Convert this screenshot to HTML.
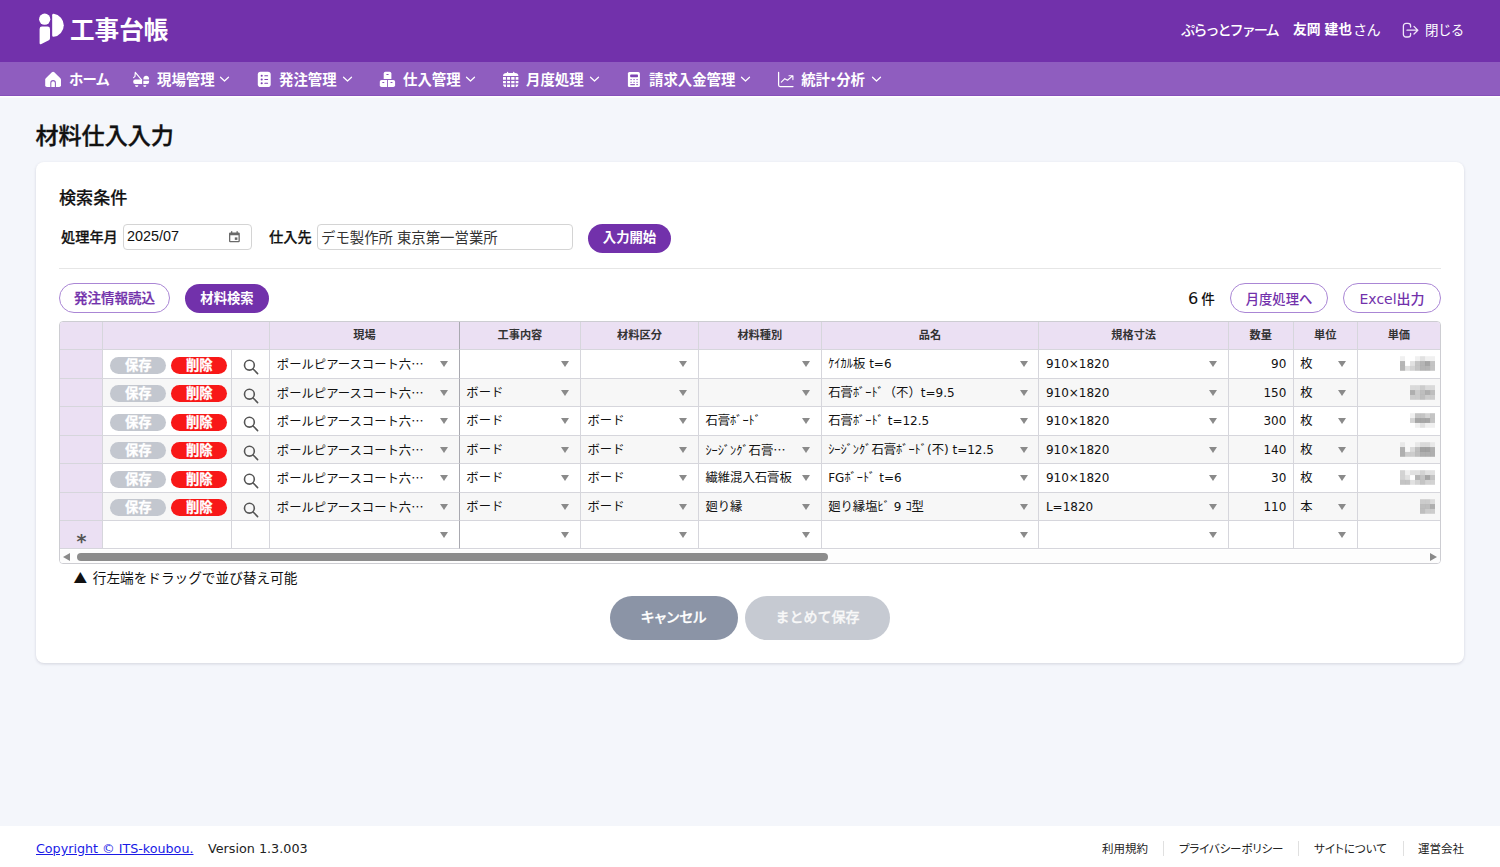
<!DOCTYPE html>
<html lang="ja">
<head>
<meta charset="utf-8">
<title>材料仕入入力 - 工事台帳</title>
<style>
*{box-sizing:border-box;margin:0;padding:0}
html,body{width:1500px;height:867px;overflow:hidden}
body{background:#f4f6fb;font-family:"Liberation Sans","Noto Sans CJK JP",sans-serif;color:#111;position:relative;font-size:14px}
.abs{position:absolute;white-space:nowrap}
#hdr{position:absolute;left:0;top:0;width:1500px;height:62.5px;background:#7231ab}
#nav{position:absolute;left:0;top:62.4px;width:1500px;height:34px;background:#8f5dbf;border-bottom:1px solid #8650ba;box-shadow:0 1.5px 0 #fff}
.w{color:#fff}
.navt{position:absolute;top:63.6px;height:34px;line-height:33px;font-size:14.4px;font-weight:700;color:#fff;white-space:nowrap}
.chev{position:absolute;top:75px;width:11px;height:8px}
.ico{position:absolute}
#card{position:absolute;left:36px;top:162px;width:1428px;height:501px;background:#fff;border-radius:8px;box-shadow:0 1px 3px rgba(60,60,90,.18)}
.btn{position:absolute;border-radius:16px;font-size:13.33px;text-align:center;white-space:nowrap}
.btn.fill{background:#7231ab;color:#fff;font-weight:700}
.btn.out{background:#fff;color:#7231ab;border:1.4px solid #aa86d5}
.inp{position:absolute;top:224px;height:26px;border:1px solid #d4d4d4;border-radius:4px;background:#fff;font-size:14.4px;line-height:23px;padding-left:3px;white-space:nowrap}
#grid{position:absolute;left:59px;top:321px;width:1382px;height:243px;border:1px solid #cdcdd2;border-radius:4px;background:#fff;overflow:hidden}
.c{position:absolute;border-right:1px solid #d6d6dc;border-bottom:1px solid #d6d6dc;font-size:12.35px;line-height:29.2px;padding-left:6.5px;white-space:nowrap;overflow:hidden;color:#111;font-family:"DejaVu Sans","Noto Sans CJK JP",sans-serif}
.c.h{font-family:"Liberation Sans","Noto Sans CJK JP",sans-serif;background:#ebe0f3;font-size:11.2px;font-weight:700;text-align:center;padding:0;color:#333;line-height:27.6px;font-feature-settings:normal;letter-spacing:0}
.c.alt{background:#f7f7f7}
.c.num{text-align:right;padding-right:6.3px;padding-left:0;font-size:12px}
.lt{font-size:12px}
.c.fz{border-right-color:#a9a9b0}
.tri{position:absolute;right:10.5px;top:11.2px;width:0;height:0;border-left:4.5px solid transparent;border-right:4.5px solid transparent;border-top:6px solid #8a8a8a}
.pill{-webkit-text-stroke:.3px #fff;position:absolute;top:6.7px;width:56.5px;height:17px;border-radius:8.5px;color:#fff;font-size:13.3px;font-weight:700;line-height:17px;font-family:"Liberation Sans","Noto Sans CJK JP",sans-serif;text-align:center;letter-spacing:0;font-feature-settings:normal}
.hk{letter-spacing:0}
.el{font-family:"Noto Sans CJK JP",sans-serif;font-feature-settings:normal;letter-spacing:0;display:inline-block;}
.ast{position:absolute;left:0;width:43px;top:6px;text-align:center;font-size:19px;font-weight:700;color:#555;font-family:"DejaVu Sans",sans-serif;line-height:28px}
#ft{position:absolute;left:0;top:826px;width:1500px;height:41px;background:#fff}
.ftt{position:absolute;top:826px;height:41px;line-height:46.6px;font-size:11.5px;color:#222;white-space:nowrap}
.sep{position:absolute;top:841.3px;width:1px;height:15.2px;background:#e0e0e0}
</style>
</head>
<body>
<div id="hdr"></div>
<div id="nav"></div>
<svg class="ico" style="left:36px;top:10px" width="32" height="38" viewBox="36 10 32 38">
<circle cx="44.7" cy="19.2" r="5.6" fill="#fff"/>
<path d="M39.6 29 Q39.6 26.6 42 26.6 L47.6 26.6 Q50 26.6 50 29 L50 38.3 Q50 39.6 48.8 40.2 L41.4 44 Q39.6 44.8 39.6 43 Z" fill="#fff"/>
<path d="M52.2 15.2 Q52.2 13.7 53.7 13.8 A11.6 11.6 0 0 1 53.7 36.8 Q52.2 36.9 52.2 35.4 Z" fill="#fff"/>
</svg>
<div class="abs w" style="left:70px;top:12.5px;font-size:24.6px;font-weight:700;line-height:36px">工事台帳</div>
<div class="abs w" style="left:1181px;top:19px;font-size:14.2px;font-weight:500;line-height:22px;letter-spacing:-2.05px">ぷらっとファーム</div>
<div class="abs w" style="left:1293px;top:19px;font-size:13.8px;font-weight:700;line-height:22px">友岡 建也</div>
<div class="abs w" style="left:1353px;top:19px;font-size:14.2px;font-weight:400;line-height:22px;letter-spacing:-.8px">さん</div>
<svg class="ico" style="left:1400px;top:20px" width="22" height="20" viewBox="1400 20 22 20" fill="none" stroke="#f0e6f8" stroke-width="1.3" stroke-linecap="round" stroke-linejoin="round">
<path d="M1410.6 27 V26 A2.6 2.6 0 0 0 1408 23.4 H1406 A2.6 2.6 0 0 0 1403.4 26 V34.4 A2.6 2.6 0 0 0 1406 37 H1408 A2.6 2.6 0 0 0 1410.6 34.4 V33.4"/>
<path d="M1407 30.2 H1417.6 M1414 26.4 L1417.8 30.2 L1414 34"/>
</svg>
<div class="abs w" style="left:1425px;top:19.5px;font-size:13.5px;font-weight:400;line-height:22px;letter-spacing:-.6px">閉じる</div>

<!-- home -->
<svg class="ico" style="left:44px;top:70px" width="19" height="19" viewBox="44 70 19 19">
<path d="M45.2 79.6 Q45.2 78.8 45.8 78.2 L51.9 72.2 Q53.1 71.1 54.3 72.2 L60.4 78.2 Q61 78.8 61 79.6 V85.3 Q61 87.1 59.2 87.1 H47 Q45.2 87.1 45.2 85.3 Z" fill="#fff"/>
<path d="M50.8 87.2 V82.9 A2.3 2.3 0 0 1 55.4 82.9 V87.2" fill="none" stroke="#8f5dbf" stroke-width="1.05"/>
</svg>
<div class="navt" style="left:69px;letter-spacing:-.9px">ホーム</div>
<!-- site -->
<svg class="ico" style="left:131px;top:70px" width="20" height="19" viewBox="131 70 20 19">
<path d="M133.6 77.6 L135 76.4 L135.3 72.4 L141.6 79.9" fill="none" stroke="#fff" stroke-width="1.15" stroke-linejoin="round" stroke-linecap="round"/>
<path d="M133.2 81.6 Q133.2 79.6 135.2 79.6 H142.1 V84 H135.2 Q133.2 84 133.2 82 Z" fill="#fff"/>
<path d="M135 85.2 H138.4 A1.7 1.8 0 0 1 135 85.2 Z" fill="#fff"/>
<path d="M143.3 79.5 A2.9 3.7 0 0 1 149.1 79.5 Z" fill="#fff"/>
<path d="M143.3 80.8 H149.1 V82 Q149.1 84 147.1 84 H143.3 Z" fill="#fff"/>
<path d="M143.2 85.2 H146.4 A1.6 1.8 0 0 1 143.2 85.2 Z" fill="#fff"/>
</svg>
<div class="navt" style="left:157px">現場管理</div>
<svg class="chev" style="left:218.7px" viewBox="0 0 11 8" fill="none" stroke="#fff" stroke-width="1.25" stroke-linecap="round" stroke-linejoin="round"><path d="M1.5 2.2 L5.5 6 L9.5 2.2"/></svg>
<!-- order -->
<svg class="ico" style="left:256px;top:70px" width="17" height="19" viewBox="256 70 17 19">
<rect x="257.8" y="71.8" width="12.9" height="15.3" rx="2.8" fill="#fff"/>
<g fill="#7a3fb2"><circle cx="261.7" cy="75.7" r="1.05"/><circle cx="261.7" cy="79.5" r="1.05"/><circle cx="261.7" cy="83.3" r="1.05"/>
<rect x="264.3" y="75.15" width="3.8" height="1.1" rx=".5"/><rect x="264.3" y="78.95" width="3.8" height="1.1" rx=".5"/><rect x="264.3" y="82.75" width="3.8" height="1.1" rx=".5"/></g>
</svg>
<div class="navt" style="left:279px">発注管理</div>
<svg class="chev" style="left:341.7px" viewBox="0 0 11 8" fill="none" stroke="#fff" stroke-width="1.25" stroke-linecap="round" stroke-linejoin="round"><path d="M1.5 2.2 L5.5 6 L9.5 2.2"/></svg>
<!-- purchase -->
<svg class="ico" style="left:378px;top:70px" width="19" height="19" viewBox="378 70 19 19">
<path d="M383.7 73.6 Q383.7 71.8 385.5 71.8 H389.6 Q391.4 71.8 391.4 73.6 V78.9 H383.7 Z" fill="#fff"/>
<path d="M379.8 81.7 Q379.8 79.9 381.6 79.9 H387 V87.1 H381.6 Q379.8 87.1 379.8 85.3 Z" fill="#fff"/>
<path d="M387.9 79.9 H393.3 Q395.1 79.9 395.1 81.7 V85.3 Q395.1 87.1 393.3 87.1 H387.9 Z" fill="#fff"/>
<g fill="#8148b6"><ellipse cx="387.5" cy="74.5" rx="1.3" ry=".5"/><ellipse cx="383.3" cy="82.5" rx="1.2" ry=".5"/><ellipse cx="391.5" cy="82.5" rx="1.2" ry=".5"/></g>
</svg>
<div class="navt" style="left:403px">仕入管理</div>
<svg class="chev" style="left:464.7px" viewBox="0 0 11 8" fill="none" stroke="#fff" stroke-width="1.25" stroke-linecap="round" stroke-linejoin="round"><path d="M1.5 2.2 L5.5 6 L9.5 2.2"/></svg>
<!-- monthly -->
<svg class="ico" style="left:501px;top:70px" width="19" height="19" viewBox="501 70 19 19">
<path d="M503 76 Q503 72.9 506.4 72.9 H515 Q518.4 72.9 518.4 76 V84 Q518.4 87.1 515.4 87.1 H506 Q503 87.1 503 84 Z" fill="#fff"/>
<rect x="506.9" y="71.8" width="1.3" height="2.4" rx=".6" fill="#fff"/><rect x="513.1" y="71.8" width="1.3" height="2.4" rx=".6" fill="#fff"/>
<g stroke="#8f5dbf" stroke-width="1.15" fill="none"><path d="M502.5 76.5 H519 M502.5 80.3 H519 M502.5 83.9 H519 M506.5 76.5 V87.5 M510.65 76.5 V87.5 M515.1 76.5 V87.5"/></g>
</svg>
<div class="navt" style="left:526px">月度処理</div>
<svg class="chev" style="left:588.7px" viewBox="0 0 11 8" fill="none" stroke="#fff" stroke-width="1.25" stroke-linecap="round" stroke-linejoin="round"><path d="M1.5 2.2 L5.5 6 L9.5 2.2"/></svg>
<!-- billing -->
<svg class="ico" style="left:626px;top:70px" width="16" height="19" viewBox="626 70 16 19">
<rect x="627.9" y="72" width="12" height="15.1" rx="1.5" fill="#fff"/>
<rect x="630.2" y="74.4" width="7.8" height="2.8" rx=".8" fill="#7d43b4"/>
<g fill="#a77fcf"><rect x="630.2" y="79.1" width="1.8" height="1"/><rect x="633.2" y="79.1" width="1.8" height="1"/><rect x="636.2" y="79.1" width="1.8" height="1"/>
<rect x="630.2" y="81.8" width="1.8" height="1"/><rect x="633.2" y="81.8" width="1.8" height="1"/><rect x="636.2" y="81.8" width="1.8" height="1"/></g>
<g fill="#9160c0"><rect x="630.2" y="84.1" width="4.8" height="1.1" rx=".4"/><rect x="636.2" y="84.1" width="1.8" height="1.1" rx=".4"/></g>
</svg>
<div class="navt" style="left:649px">請求入金管理</div>
<svg class="chev" style="left:739.7px" viewBox="0 0 11 8" fill="none" stroke="#fff" stroke-width="1.25" stroke-linecap="round" stroke-linejoin="round"><path d="M1.5 2.2 L5.5 6 L9.5 2.2"/></svg>
<!-- stats -->
<svg class="ico" style="left:776px;top:70px" width="19" height="19" viewBox="776 70 19 19" fill="none" stroke="#fff" stroke-width="1.25" stroke-linecap="round" stroke-linejoin="round">
<path d="M778.6 72.3 V85 Q778.6 86.5 780.1 86.5 H793"/>
<path d="M781.3 82.2 L784.8 78.7 L787.5 80.2 L792.6 75.9 M789 75.7 H792.9 V79.6" stroke-width="1.15"/>
</svg>
<div class="navt" style="left:801.2px">統計<span style="display:inline-block;width:6.2px;text-indent:-4.1px;white-space:nowrap">・</span>分析</div>
<svg class="chev" style="left:870.7px" viewBox="0 0 11 8" fill="none" stroke="#fff" stroke-width="1.25" stroke-linecap="round" stroke-linejoin="round"><path d="M1.5 2.2 L5.5 6 L9.5 2.2"/></svg>

<div class="abs" style="left:35.4px;top:118.9px;font-size:23.1px;font-weight:500;line-height:34px;color:#111;-webkit-text-stroke:.35px #111">材料仕入入力</div>
<div id="card"></div>
<div class="abs" style="left:59px;top:186px;font-size:17.1px;font-weight:500;line-height:26px;-webkit-text-stroke:.2px #111">検索条件</div>
<div class="abs" style="left:61px;top:226px;font-size:14.2px;font-weight:500;line-height:22px;-webkit-text-stroke:.25px #111">処理年月</div>
<div class="inp" style="left:123px;width:129px">2025/07</div>
<svg class="ico" style="left:227px;top:229px" width="16" height="16" viewBox="227 229 16 16">
<path d="M230.2 232.4 H238.6 Q239.8 232.4 239.8 233.6 V241 Q239.8 242.2 238.6 242.2 H230.2 Q229 242.2 229 241 V233.6 Q229 232.4 230.2 232.4 Z M230.3 235.2 V240.9 H238.5 V235.2 Z" fill="#6a6a6a" fill-rule="evenodd"/>
<rect x="231" y="231.2" width="1.3" height="2" fill="#6a6a6a"/><rect x="236.5" y="231.2" width="1.3" height="2" fill="#6a6a6a"/>
<rect x="234.8" y="237.4" width="2.6" height="2.5" fill="#6a6a6a"/>
</svg>
<div class="abs" style="left:269px;top:226px;font-size:14.2px;font-weight:500;line-height:22px;-webkit-text-stroke:.25px #111">仕入先</div>
<div class="inp" style="left:317px;width:256px;color:#333;line-height:26px">デモ製作所 東京第一営業所</div>
<div class="btn fill" style="left:588px;top:224px;width:83px;height:29px;line-height:28.6px;border-radius:15px">入力開始</div>
<div class="abs" style="left:59px;top:268px;width:1382px;height:1px;background:#e6e6e6"></div>
<div class="btn out" style="left:58.7px;top:283.2px;width:111.6px;height:30.3px;line-height:30.6px;font-size:13.5px;font-weight:500;-webkit-text-stroke:.25px #7231ab">発注情報読込</div>
<div class="btn fill" style="left:185px;top:284.3px;width:84px;height:28.6px;line-height:30.4px">材料検索</div>
<div class="abs" style="left:1188px;top:288px;font-size:13.6px;line-height:22px;color:#111;font-weight:500"><span style="font-family:'DejaVu Sans',sans-serif;font-weight:400;font-size:16.2px;margin-right:3px">6</span>件</div>
<div class="btn out" style="left:1229.8px;top:283.2px;width:98.5px;height:30.3px;line-height:31.2px;font-weight:500">月度処理へ</div>
<div class="btn out" style="left:1342.8px;top:283.2px;width:98.5px;height:30.3px;line-height:31.2px;font-weight:500;font-family:'DejaVu Sans','Noto Sans CJK JP',sans-serif;font-size:14px">Excel出力</div>

<div id="grid">
<div class="c h" style="left:0.0px;top:0.0px;width:43.3px;height:28.2px;"></div>
<div class="c h" style="left:43.3px;top:0.0px;width:167.0px;height:28.2px;"></div>
<div class="c h fz" style="left:210.3px;top:0.0px;width:189.5px;height:28.2px;">現場</div>
<div class="c h" style="left:399.8px;top:0.0px;width:121.2px;height:28.2px;">工事内容</div>
<div class="c h" style="left:521.0px;top:0.0px;width:117.9px;height:28.2px;">材料区分</div>
<div class="c h" style="left:638.9px;top:0.0px;width:122.8px;height:28.2px;">材料種別</div>
<div class="c h" style="left:761.7px;top:0.0px;width:217.7px;height:28.2px;">品名</div>
<div class="c h" style="left:979.4px;top:0.0px;width:189.5px;height:28.2px;">規格寸法</div>
<div class="c h" style="left:1168.9px;top:0.0px;width:64.8px;height:28.2px;">数量</div>
<div class="c h" style="left:1233.7px;top:0.0px;width:64.0px;height:28.2px;">単位</div>
<div class="c h" style="left:1297.7px;top:0.0px;width:83.3px;height:28.2px;">単価</div>
<div class="c h" style="left:0.0px;top:28.2px;width:43.3px;height:28.5px;"></div>
<div class="c " style="left:43.3px;top:28.2px;width:129.0px;height:28.5px;"><span class="pill" style="left:6.7px;background:#c3c7cf">保存</span><span class="pill" style="left:67.7px;background:#f81818">削除</span></div>
<div class="c " style="left:172.3px;top:28.2px;width:38.0px;height:28.5px;"><svg style="position:absolute;left:9px;top:6px" width="20" height="20" viewBox="0 0 20 20" fill="none" stroke="#555" stroke-width="1.6" stroke-linecap="round"><circle cx="8.4" cy="9.2" r="4.9"/><path d="M12.1 13 L16.6 17.6"/></svg></div>
<div class="c  fz" style="left:210.3px;top:28.2px;width:189.5px;height:28.5px;">ポールピアースコート六<span class="el">…</span><i class="tri"></i></div>
<div class="c " style="left:399.8px;top:28.2px;width:121.2px;height:28.5px;"><i class="tri"></i></div>
<div class="c " style="left:521.0px;top:28.2px;width:117.9px;height:28.5px;"><i class="tri"></i></div>
<div class="c " style="left:638.9px;top:28.2px;width:122.8px;height:28.5px;"><i class="tri"></i></div>
<div class="c " style="left:761.7px;top:28.2px;width:217.7px;height:28.5px;"><span class="hk">ｹｲｶﾙ</span>板 <span class="lt">t=6</span><i class="tri"></i></div>
<div class="c " style="left:979.4px;top:28.2px;width:189.5px;height:28.5px;font-size:12px;">910×1820<i class="tri"></i></div>
<div class="c  num" style="left:1168.9px;top:28.2px;width:64.8px;height:28.5px;">90</div>
<div class="c " style="left:1233.7px;top:28.2px;width:64.0px;height:28.5px;">枚<i class="tri"></i></div>
<div class="c " style="left:1297.7px;top:28.2px;width:83.3px;height:28.5px;"><svg style="position:absolute;left:42.5px;top:6px" width="35" height="15" viewBox="0 0 35 14.6"><rect x="0" y="0.00" width="5.05" height="4.9" fill="#000" fill-opacity="0.058"/><rect x="15" y="0.00" width="5.05" height="4.9" fill="#000" fill-opacity="0.058"/><rect x="20" y="0.00" width="5.05" height="4.9" fill="#000" fill-opacity="0.116"/><rect x="25" y="0.00" width="5.05" height="4.9" fill="#000" fill-opacity="0.058"/><rect x="30" y="0.00" width="5.05" height="4.9" fill="#000" fill-opacity="0.058"/><rect x="0" y="4.85" width="5.05" height="4.9" fill="#000" fill-opacity="0.290"/><rect x="10" y="4.85" width="5.05" height="4.9" fill="#000" fill-opacity="0.116"/><rect x="15" y="4.85" width="5.05" height="4.9" fill="#000" fill-opacity="0.232"/><rect x="20" y="4.85" width="5.05" height="4.9" fill="#000" fill-opacity="0.290"/><rect x="25" y="4.85" width="5.05" height="4.9" fill="#000" fill-opacity="0.348"/><rect x="30" y="4.85" width="5.05" height="4.9" fill="#000" fill-opacity="0.232"/><rect x="0" y="9.70" width="5.05" height="4.9" fill="#000" fill-opacity="0.290"/><rect x="5" y="9.70" width="5.05" height="4.9" fill="#000" fill-opacity="0.116"/><rect x="10" y="9.70" width="5.05" height="4.9" fill="#000" fill-opacity="0.174"/><rect x="15" y="9.70" width="5.05" height="4.9" fill="#000" fill-opacity="0.232"/><rect x="20" y="9.70" width="5.05" height="4.9" fill="#000" fill-opacity="0.290"/><rect x="25" y="9.70" width="5.05" height="4.9" fill="#000" fill-opacity="0.290"/><rect x="30" y="9.70" width="5.05" height="4.9" fill="#000" fill-opacity="0.232"/></svg></div>
<div class="c h" style="left:0.0px;top:56.7px;width:43.3px;height:28.4px;"></div>
<div class="c alt" style="left:43.3px;top:56.7px;width:129.0px;height:28.4px;"><span class="pill" style="left:6.7px;background:#c3c7cf">保存</span><span class="pill" style="left:67.7px;background:#f81818">削除</span></div>
<div class="c alt" style="left:172.3px;top:56.7px;width:38.0px;height:28.4px;"><svg style="position:absolute;left:9px;top:6px" width="20" height="20" viewBox="0 0 20 20" fill="none" stroke="#555" stroke-width="1.6" stroke-linecap="round"><circle cx="8.4" cy="9.2" r="4.9"/><path d="M12.1 13 L16.6 17.6"/></svg></div>
<div class="c alt fz" style="left:210.3px;top:56.7px;width:189.5px;height:28.4px;">ポールピアースコート六<span class="el">…</span><i class="tri"></i></div>
<div class="c alt" style="left:399.8px;top:56.7px;width:121.2px;height:28.4px;">ボード<i class="tri"></i></div>
<div class="c alt" style="left:521.0px;top:56.7px;width:117.9px;height:28.4px;"><i class="tri"></i></div>
<div class="c alt" style="left:638.9px;top:56.7px;width:122.8px;height:28.4px;"><i class="tri"></i></div>
<div class="c alt" style="left:761.7px;top:56.7px;width:217.7px;height:28.4px;">石膏<span class="hk">ﾎﾞｰﾄﾞ</span>（不）<span class="lt">t=9.5</span><i class="tri"></i></div>
<div class="c alt" style="left:979.4px;top:56.7px;width:189.5px;height:28.4px;font-size:12px;">910×1820<i class="tri"></i></div>
<div class="c alt num" style="left:1168.9px;top:56.7px;width:64.8px;height:28.4px;">150</div>
<div class="c alt" style="left:1233.7px;top:56.7px;width:64.0px;height:28.4px;">枚<i class="tri"></i></div>
<div class="c alt" style="left:1297.7px;top:56.7px;width:83.3px;height:28.4px;"><svg style="position:absolute;left:42.5px;top:6px" width="35" height="15" viewBox="0 0 35 14.6"><rect x="10" y="0.00" width="5.05" height="4.9" fill="#000" fill-opacity="0.116"/><rect x="15" y="0.00" width="5.05" height="4.9" fill="#000" fill-opacity="0.116"/><rect x="20" y="0.00" width="5.05" height="4.9" fill="#000" fill-opacity="0.174"/><rect x="25" y="0.00" width="5.05" height="4.9" fill="#000" fill-opacity="0.116"/><rect x="30" y="0.00" width="5.05" height="4.9" fill="#000" fill-opacity="0.116"/><rect x="10" y="4.85" width="5.05" height="4.9" fill="#000" fill-opacity="0.290"/><rect x="15" y="4.85" width="5.05" height="4.9" fill="#000" fill-opacity="0.174"/><rect x="20" y="4.85" width="5.05" height="4.9" fill="#000" fill-opacity="0.232"/><rect x="25" y="4.85" width="5.05" height="4.9" fill="#000" fill-opacity="0.290"/><rect x="30" y="4.85" width="5.05" height="4.9" fill="#000" fill-opacity="0.232"/><rect x="10" y="9.70" width="5.05" height="4.9" fill="#000" fill-opacity="0.174"/><rect x="15" y="9.70" width="5.05" height="4.9" fill="#000" fill-opacity="0.174"/><rect x="20" y="9.70" width="5.05" height="4.9" fill="#000" fill-opacity="0.232"/><rect x="25" y="9.70" width="5.05" height="4.9" fill="#000" fill-opacity="0.174"/><rect x="30" y="9.70" width="5.05" height="4.9" fill="#000" fill-opacity="0.174"/></svg></div>
<div class="c h" style="left:0.0px;top:85.1px;width:43.3px;height:28.5px;"></div>
<div class="c " style="left:43.3px;top:85.1px;width:129.0px;height:28.5px;"><span class="pill" style="left:6.7px;background:#c3c7cf">保存</span><span class="pill" style="left:67.7px;background:#f81818">削除</span></div>
<div class="c " style="left:172.3px;top:85.1px;width:38.0px;height:28.5px;"><svg style="position:absolute;left:9px;top:6px" width="20" height="20" viewBox="0 0 20 20" fill="none" stroke="#555" stroke-width="1.6" stroke-linecap="round"><circle cx="8.4" cy="9.2" r="4.9"/><path d="M12.1 13 L16.6 17.6"/></svg></div>
<div class="c  fz" style="left:210.3px;top:85.1px;width:189.5px;height:28.5px;">ポールピアースコート六<span class="el">…</span><i class="tri"></i></div>
<div class="c " style="left:399.8px;top:85.1px;width:121.2px;height:28.5px;">ボード<i class="tri"></i></div>
<div class="c " style="left:521.0px;top:85.1px;width:117.9px;height:28.5px;">ボード<i class="tri"></i></div>
<div class="c " style="left:638.9px;top:85.1px;width:122.8px;height:28.5px;">石膏<span class="hk">ﾎﾞｰﾄﾞ</span><i class="tri"></i></div>
<div class="c " style="left:761.7px;top:85.1px;width:217.7px;height:28.5px;">石膏<span class="hk">ﾎﾞｰﾄﾞ</span> <span class="lt">t=12.5</span><i class="tri"></i></div>
<div class="c " style="left:979.4px;top:85.1px;width:189.5px;height:28.5px;font-size:12px;">910×1820<i class="tri"></i></div>
<div class="c  num" style="left:1168.9px;top:85.1px;width:64.8px;height:28.5px;">300</div>
<div class="c " style="left:1233.7px;top:85.1px;width:64.0px;height:28.5px;">枚<i class="tri"></i></div>
<div class="c " style="left:1297.7px;top:85.1px;width:83.3px;height:28.5px;"><svg style="position:absolute;left:42.5px;top:6px" width="35" height="15" viewBox="0 0 35 14.6"><rect x="10" y="0.00" width="5.05" height="4.9" fill="#000" fill-opacity="0.058"/><rect x="15" y="0.00" width="5.05" height="4.9" fill="#000" fill-opacity="0.232"/><rect x="20" y="0.00" width="5.05" height="4.9" fill="#000" fill-opacity="0.232"/><rect x="25" y="0.00" width="5.05" height="4.9" fill="#000" fill-opacity="0.174"/><rect x="30" y="0.00" width="5.05" height="4.9" fill="#000" fill-opacity="0.232"/><rect x="10" y="4.85" width="5.05" height="4.9" fill="#000" fill-opacity="0.174"/><rect x="15" y="4.85" width="5.05" height="4.9" fill="#000" fill-opacity="0.348"/><rect x="20" y="4.85" width="5.05" height="4.9" fill="#000" fill-opacity="0.348"/><rect x="25" y="4.85" width="5.05" height="4.9" fill="#000" fill-opacity="0.348"/><rect x="30" y="4.85" width="5.05" height="4.9" fill="#000" fill-opacity="0.232"/><rect x="15" y="9.70" width="5.05" height="4.9" fill="#000" fill-opacity="0.058"/><rect x="20" y="9.70" width="5.05" height="4.9" fill="#000" fill-opacity="0.116"/><rect x="25" y="9.70" width="5.05" height="4.9" fill="#000" fill-opacity="0.058"/><rect x="30" y="9.70" width="5.05" height="4.9" fill="#000" fill-opacity="0.058"/></svg></div>
<div class="c h" style="left:0.0px;top:113.6px;width:43.3px;height:28.4px;"></div>
<div class="c alt" style="left:43.3px;top:113.6px;width:129.0px;height:28.4px;"><span class="pill" style="left:6.7px;background:#c3c7cf">保存</span><span class="pill" style="left:67.7px;background:#f81818">削除</span></div>
<div class="c alt" style="left:172.3px;top:113.6px;width:38.0px;height:28.4px;"><svg style="position:absolute;left:9px;top:6px" width="20" height="20" viewBox="0 0 20 20" fill="none" stroke="#555" stroke-width="1.6" stroke-linecap="round"><circle cx="8.4" cy="9.2" r="4.9"/><path d="M12.1 13 L16.6 17.6"/></svg></div>
<div class="c alt fz" style="left:210.3px;top:113.6px;width:189.5px;height:28.4px;">ポールピアースコート六<span class="el">…</span><i class="tri"></i></div>
<div class="c alt" style="left:399.8px;top:113.6px;width:121.2px;height:28.4px;">ボード<i class="tri"></i></div>
<div class="c alt" style="left:521.0px;top:113.6px;width:117.9px;height:28.4px;">ボード<i class="tri"></i></div>
<div class="c alt" style="left:638.9px;top:113.6px;width:122.8px;height:28.4px;"><span class="hk">ｼｰｼﾞﾝｸﾞ</span>石膏<span class="el">…</span><i class="tri"></i></div>
<div class="c alt" style="left:761.7px;top:113.6px;width:217.7px;height:28.4px;"><span class="hk">ｼｰｼﾞﾝｸﾞ</span>石膏<span class="hk">ﾎﾞｰﾄﾞ</span><span class="lt">(</span>不<span class="lt">) t=12.5</span><i class="tri"></i></div>
<div class="c alt" style="left:979.4px;top:113.6px;width:189.5px;height:28.4px;font-size:12px;">910×1820<i class="tri"></i></div>
<div class="c alt num" style="left:1168.9px;top:113.6px;width:64.8px;height:28.4px;">140</div>
<div class="c alt" style="left:1233.7px;top:113.6px;width:64.0px;height:28.4px;">枚<i class="tri"></i></div>
<div class="c alt" style="left:1297.7px;top:113.6px;width:83.3px;height:28.4px;"><svg style="position:absolute;left:42.5px;top:6px" width="35" height="15" viewBox="0 0 35 14.6"><rect x="0" y="0.00" width="5.05" height="4.9" fill="#000" fill-opacity="0.058"/><rect x="15" y="0.00" width="5.05" height="4.9" fill="#000" fill-opacity="0.058"/><rect x="20" y="0.00" width="5.05" height="4.9" fill="#000" fill-opacity="0.116"/><rect x="25" y="0.00" width="5.05" height="4.9" fill="#000" fill-opacity="0.116"/><rect x="30" y="0.00" width="5.05" height="4.9" fill="#000" fill-opacity="0.058"/><rect x="0" y="4.85" width="5.05" height="4.9" fill="#000" fill-opacity="0.290"/><rect x="10" y="4.85" width="5.05" height="4.9" fill="#000" fill-opacity="0.116"/><rect x="15" y="4.85" width="5.05" height="4.9" fill="#000" fill-opacity="0.232"/><rect x="20" y="4.85" width="5.05" height="4.9" fill="#000" fill-opacity="0.348"/><rect x="25" y="4.85" width="5.05" height="4.9" fill="#000" fill-opacity="0.348"/><rect x="30" y="4.85" width="5.05" height="4.9" fill="#000" fill-opacity="0.290"/><rect x="0" y="9.70" width="5.05" height="4.9" fill="#000" fill-opacity="0.290"/><rect x="5" y="9.70" width="5.05" height="4.9" fill="#000" fill-opacity="0.174"/><rect x="10" y="9.70" width="5.05" height="4.9" fill="#000" fill-opacity="0.174"/><rect x="15" y="9.70" width="5.05" height="4.9" fill="#000" fill-opacity="0.232"/><rect x="20" y="9.70" width="5.05" height="4.9" fill="#000" fill-opacity="0.290"/><rect x="25" y="9.70" width="5.05" height="4.9" fill="#000" fill-opacity="0.290"/><rect x="30" y="9.70" width="5.05" height="4.9" fill="#000" fill-opacity="0.290"/></svg></div>
<div class="c h" style="left:0.0px;top:142.0px;width:43.3px;height:28.5px;"></div>
<div class="c " style="left:43.3px;top:142.0px;width:129.0px;height:28.5px;"><span class="pill" style="left:6.7px;background:#c3c7cf">保存</span><span class="pill" style="left:67.7px;background:#f81818">削除</span></div>
<div class="c " style="left:172.3px;top:142.0px;width:38.0px;height:28.5px;"><svg style="position:absolute;left:9px;top:6px" width="20" height="20" viewBox="0 0 20 20" fill="none" stroke="#555" stroke-width="1.6" stroke-linecap="round"><circle cx="8.4" cy="9.2" r="4.9"/><path d="M12.1 13 L16.6 17.6"/></svg></div>
<div class="c  fz" style="left:210.3px;top:142.0px;width:189.5px;height:28.5px;">ポールピアースコート六<span class="el">…</span><i class="tri"></i></div>
<div class="c " style="left:399.8px;top:142.0px;width:121.2px;height:28.5px;">ボード<i class="tri"></i></div>
<div class="c " style="left:521.0px;top:142.0px;width:117.9px;height:28.5px;">ボード<i class="tri"></i></div>
<div class="c " style="left:638.9px;top:142.0px;width:122.8px;height:28.5px;">繊維混入石膏板<i class="tri"></i></div>
<div class="c " style="left:761.7px;top:142.0px;width:217.7px;height:28.5px;"><span class="lt">FG</span><span class="hk">ﾎﾞｰﾄﾞ</span> <span class="lt">t=6</span><i class="tri"></i></div>
<div class="c " style="left:979.4px;top:142.0px;width:189.5px;height:28.5px;font-size:12px;">910×1820<i class="tri"></i></div>
<div class="c  num" style="left:1168.9px;top:142.0px;width:64.8px;height:28.5px;">30</div>
<div class="c " style="left:1233.7px;top:142.0px;width:64.0px;height:28.5px;">枚<i class="tri"></i></div>
<div class="c " style="left:1297.7px;top:142.0px;width:83.3px;height:28.5px;"><svg style="position:absolute;left:42.5px;top:6px" width="35" height="15" viewBox="0 0 35 14.6"><rect x="0" y="0.00" width="5.05" height="4.9" fill="#000" fill-opacity="0.174"/><rect x="5" y="0.00" width="5.05" height="4.9" fill="#000" fill-opacity="0.058"/><rect x="10" y="0.00" width="5.05" height="4.9" fill="#000" fill-opacity="0.116"/><rect x="15" y="0.00" width="5.05" height="4.9" fill="#000" fill-opacity="0.116"/><rect x="20" y="0.00" width="5.05" height="4.9" fill="#000" fill-opacity="0.174"/><rect x="25" y="0.00" width="5.05" height="4.9" fill="#000" fill-opacity="0.116"/><rect x="30" y="0.00" width="5.05" height="4.9" fill="#000" fill-opacity="0.116"/><rect x="0" y="4.85" width="5.05" height="4.9" fill="#000" fill-opacity="0.174"/><rect x="5" y="4.85" width="5.05" height="4.9" fill="#000" fill-opacity="0.116"/><rect x="15" y="4.85" width="5.05" height="4.9" fill="#000" fill-opacity="0.290"/><rect x="20" y="4.85" width="5.05" height="4.9" fill="#000" fill-opacity="0.232"/><rect x="25" y="4.85" width="5.05" height="4.9" fill="#000" fill-opacity="0.348"/><rect x="30" y="4.85" width="5.05" height="4.9" fill="#000" fill-opacity="0.232"/><rect x="0" y="9.70" width="5.05" height="4.9" fill="#000" fill-opacity="0.232"/><rect x="5" y="9.70" width="5.05" height="4.9" fill="#000" fill-opacity="0.232"/><rect x="10" y="9.70" width="5.05" height="4.9" fill="#000" fill-opacity="0.116"/><rect x="15" y="9.70" width="5.05" height="4.9" fill="#000" fill-opacity="0.174"/><rect x="20" y="9.70" width="5.05" height="4.9" fill="#000" fill-opacity="0.232"/><rect x="25" y="9.70" width="5.05" height="4.9" fill="#000" fill-opacity="0.174"/><rect x="30" y="9.70" width="5.05" height="4.9" fill="#000" fill-opacity="0.174"/></svg></div>
<div class="c h" style="left:0.0px;top:170.5px;width:43.3px;height:28.4px;"></div>
<div class="c alt" style="left:43.3px;top:170.5px;width:129.0px;height:28.4px;"><span class="pill" style="left:6.7px;background:#c3c7cf">保存</span><span class="pill" style="left:67.7px;background:#f81818">削除</span></div>
<div class="c alt" style="left:172.3px;top:170.5px;width:38.0px;height:28.4px;"><svg style="position:absolute;left:9px;top:6px" width="20" height="20" viewBox="0 0 20 20" fill="none" stroke="#555" stroke-width="1.6" stroke-linecap="round"><circle cx="8.4" cy="9.2" r="4.9"/><path d="M12.1 13 L16.6 17.6"/></svg></div>
<div class="c alt fz" style="left:210.3px;top:170.5px;width:189.5px;height:28.4px;">ポールピアースコート六<span class="el">…</span><i class="tri"></i></div>
<div class="c alt" style="left:399.8px;top:170.5px;width:121.2px;height:28.4px;">ボード<i class="tri"></i></div>
<div class="c alt" style="left:521.0px;top:170.5px;width:117.9px;height:28.4px;">ボード<i class="tri"></i></div>
<div class="c alt" style="left:638.9px;top:170.5px;width:122.8px;height:28.4px;">廻り縁<i class="tri"></i></div>
<div class="c alt" style="left:761.7px;top:170.5px;width:217.7px;height:28.4px;">廻り縁塩<span class="hk">ﾋﾞ</span> <span class="lt">9</span> <span class="hk">ｺ</span>型<i class="tri"></i></div>
<div class="c alt" style="left:979.4px;top:170.5px;width:189.5px;height:28.4px;font-size:12px;">L=1820<i class="tri"></i></div>
<div class="c alt num" style="left:1168.9px;top:170.5px;width:64.8px;height:28.4px;">110</div>
<div class="c alt" style="left:1233.7px;top:170.5px;width:64.0px;height:28.4px;">本<i class="tri"></i></div>
<div class="c alt" style="left:1297.7px;top:170.5px;width:83.3px;height:28.4px;"><svg style="position:absolute;left:42.5px;top:6px" width="35" height="15" viewBox="0 0 35 14.6"><rect x="20" y="0.00" width="5.05" height="4.9" fill="#000" fill-opacity="0.174"/><rect x="25" y="0.00" width="5.05" height="4.9" fill="#000" fill-opacity="0.174"/><rect x="30" y="0.00" width="5.05" height="4.9" fill="#000" fill-opacity="0.116"/><rect x="20" y="4.85" width="5.05" height="4.9" fill="#000" fill-opacity="0.232"/><rect x="25" y="4.85" width="5.05" height="4.9" fill="#000" fill-opacity="0.232"/><rect x="30" y="4.85" width="5.05" height="4.9" fill="#000" fill-opacity="0.290"/><rect x="20" y="9.70" width="5.05" height="4.9" fill="#000" fill-opacity="0.232"/><rect x="25" y="9.70" width="5.05" height="4.9" fill="#000" fill-opacity="0.174"/><rect x="30" y="9.70" width="5.05" height="4.9" fill="#000" fill-opacity="0.174"/></svg></div>
<div class="c h" style="left:0.0px;top:198.9px;width:43.3px;height:28.3px;"><span class="ast">*</span></div>
<div class="c " style="left:43.3px;top:198.9px;width:129.0px;height:28.3px;"></div>
<div class="c " style="left:172.3px;top:198.9px;width:38.0px;height:28.3px;"></div>
<div class="c fz" style="left:210.3px;top:198.9px;width:189.5px;height:28.3px;"><i class="tri"></i></div>
<div class="c " style="left:399.8px;top:198.9px;width:121.2px;height:28.3px;"><i class="tri"></i></div>
<div class="c " style="left:521.0px;top:198.9px;width:117.9px;height:28.3px;"><i class="tri"></i></div>
<div class="c " style="left:638.9px;top:198.9px;width:122.8px;height:28.3px;"><i class="tri"></i></div>
<div class="c " style="left:761.7px;top:198.9px;width:217.7px;height:28.3px;"><i class="tri"></i></div>
<div class="c " style="left:979.4px;top:198.9px;width:189.5px;height:28.3px;"><i class="tri"></i></div>
<div class="c " style="left:1168.9px;top:198.9px;width:64.8px;height:28.3px;"></div>
<div class="c " style="left:1233.7px;top:198.9px;width:64.0px;height:28.3px;"><i class="tri"></i></div>
<div class="c " style="left:1297.7px;top:198.9px;width:83.3px;height:28.3px;"></div>
<div style="position:absolute;left:0;top:228.2px;width:1380px;height:14px;background:#fdfdfd"></div>
<div style="position:absolute;left:16.5px;top:230.8px;width:751px;height:8px;border-radius:4px;background:#8c8c8c"></div>
<i style="position:absolute;left:3px;top:230.6px;width:0;height:0;border-top:4.5px solid transparent;border-bottom:4.5px solid transparent;border-right:7.5px solid #8a8a8a"></i>
<i style="position:absolute;left:1370px;top:230.6px;width:0;height:0;border-top:4.5px solid transparent;border-bottom:4.5px solid transparent;border-left:7.5px solid #8a8a8a"></i>

</div>
<div class="abs" style="left:73.6px;top:564.9px;font-size:13.65px;line-height:24px;color:#111;word-spacing:1.7px"><span style="font-family:'Noto Sans CJK JP',sans-serif">▲</span> 行左端をドラッグで並び替え可能</div>
<div class="btn" style="left:610px;top:596.4px;width:127.8px;height:44px;line-height:43px;border-radius:22px;background:#8b94a6;color:#fff;font-weight:500;-webkit-text-stroke:.3px #fff;font-size:14.2px;font-feature-settings:'palt';letter-spacing:.35px">キャンセル</div>
<div class="btn" style="left:745px;top:596.4px;width:145px;height:44px;line-height:43px;border-radius:22px;background:#c6cad2;color:#f8f8f8;font-weight:500;-webkit-text-stroke:.3px #f8f8f8;font-size:14px">まとめて保存</div>

<div id="ft"></div>
<div class="ftt" style="left:36px;font-size:12.7px;color:#1a1ae6;text-decoration:underline;font-family:'DejaVu Sans',sans-serif">Copyright © ITS-koubou.</div>
<div class="ftt" style="left:208px;font-size:12.75px;font-family:'DejaVu Sans',sans-serif">Version 1.3.003</div>
<div class="ftt" style="left:1102px">利用規約</div><div class="sep" style="left:1163px"></div>
<div class="ftt" style="left:1179px;font-feature-settings:'palt';letter-spacing:-.15px">プライバシーポリシー</div><div class="sep" style="left:1298px"></div>
<div class="ftt" style="left:1314px;font-feature-settings:'palt'">サイトについて</div><div class="sep" style="left:1403px"></div>
<div class="ftt" style="left:1418px">運営会社</div>

</body>
</html>
